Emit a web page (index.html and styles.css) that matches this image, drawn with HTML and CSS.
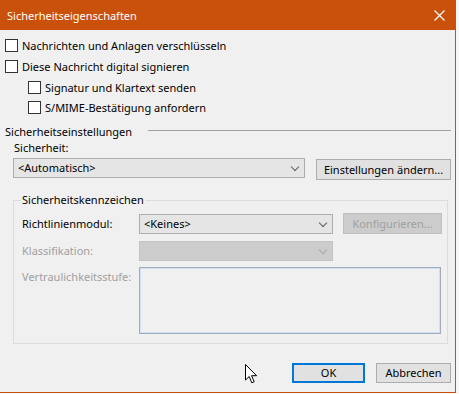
FILE: index.html
```html
<!DOCTYPE html>
<html>
<head>
    <title>Sicherheitseigenschaften</title>
    <link rel="stylesheet" href="styles.css">
</head>
<body>
    <div class="window">
        <div class="titlebar">
            <span class="title">Sicherheitseigenschaften</span>
            <svg class="close" width="11" height="11" viewBox="0 0 11 11">
                <path d="M0.5 0.5 L10.5 10.5 M10.5 0.5 L0.5 10.5" stroke="#fff" stroke-width="1.2" fill="none"/>
            </svg>
        </div>

        <div class="content">
            <div class="check"><span class="box"></span>Nachrichten und Anlagen verschlüsseln</div>
            <div class="check"><span class="box"></span>Diese Nachricht digital signieren</div>
            <div class="check sub"><span class="box"></span>Signatur und Klartext senden</div>
            <div class="check sub last"><span class="box"></span>S/MIME-Bestätigung anfordern</div>

            <div class="section-head">
                <span>Sicherheitseinstellungen</span>
                <span class="rule"></span>
            </div>
            <div class="field-label">Sicherheit:</div>
            <div class="setting-row">
                <div class="select wide">&lt;Automatisch&gt;<span class="chev"></span></div>
                <div class="btn change">Einstellungen ändern...</div>
            </div>

            <fieldset class="group">
                <legend>Sicherheitskennzeichen</legend>
                <div class="grid">
                    <div class="lbl">Richtlinienmodul:</div>
                    <div class="select">&lt;Keines&gt;<span class="chev"></span></div>
                    <div class="btn disabled">Konfigurieren...</div>

                    <div class="lbl off">Klassifikation:</div>
                    <div class="select off"><span class="chev"></span></div>
                    <div></div>

                    <div class="lbl off top">Vertraulichkeitsstufe:</div>
                    <div class="textarea"></div>
                </div>
            </fieldset>

            <div class="actions">
                <div class="btn ok">OK</div>
                <div class="btn cancel">Abbrechen</div>
            </div>
        </div>

        <svg class="cursor" width="14" height="21" viewBox="0 0 14 21">
            <path d="M0.5 0.5 L0.5 16 L4.2 12.5 L6.8 18.8 L9.2 17.8 L6.6 11.7 L11.6 11.7 Z" fill="#fff" stroke="#000" stroke-width="1"/>
        </svg>
    </div>
</body>
</html>
```

FILE: styles.css
```css
body {
    margin: 0;
    background: #f7f7f7;
    font-family: "Noto Sans", "Liberation Sans", sans-serif;
    font-size: 11px;
    color: #000;
}
.window {
    position: relative;
    width: 455px;
    height: 392px;
    background: #f0f0f0;
    border-right: 1px solid #c9510c;
    border-bottom: 1px solid #c9510c;
}
.titlebar {
    height: 30px;
    background: #c9510c;
    display: flex;
    align-items: center;
    justify-content: space-between;
    padding: 0 10px 0 7px;
}
.title {
    color: #fff;
    font-size: 11px;
}
.close {
    display: block;
}
.content {
    padding: 5px 0 0 0;
}
.check {
    display: flex;
    align-items: center;
    height: 21px;
    padding-left: 5px;
}
.check.sub {
    padding-left: 28px;
    height: 20px;
}
.box {
    width: 11px;
    height: 11px;
    border: 1px solid #333;
    background: #fff;
    margin-right: 4px;
}
.section-head {
    display: flex;
    align-items: center;
    margin-top: 6px;
    padding-left: 5px;
    height: 16px;
}
.rule {
    flex: 1;
    height: 1px;
    background: #a0a0a0;
    margin: 0 4px 2px 16px;
}
.field-label {
    padding-left: 14px;
    height: 16px;
    line-height: 16px;
    margin-top: 1px;
}
.setting-row {
    display: flex;
    align-items: flex-start;
    margin-top: 2px;
    padding-left: 13px;
}
.select {
    position: relative;
    box-sizing: border-box;
    height: 20px;
    line-height: 18px;
    background: #e5e5e5;
    border: 1px solid #adadad;
    padding-left: 4px;
}
.select.wide {
    width: 292px;
}
.select.off {
    background: #cccccc;
    border-color: #c4c4c4;
}
.chev {
    position: absolute;
    right: 6px;
    top: 5px;
    width: 5px;
    height: 5px;
    border-right: 1px solid #606060;
    border-bottom: 1px solid #606060;
    transform: rotate(45deg);
}
.select.off .chev {
    border-color: #a8a8a8;
}
.btn {
    box-sizing: border-box;
    height: 21px;
    line-height: 19px;
    text-align: center;
    background: #e1e1e1;
    border: 1px solid #adadad;
}
.change {
    width: 135px;
    margin-left: 11px;
    margin-top: 1px;
}
.group {
    margin: 12px 7px 0 13px;
    padding: 5px 0 9px 8px;
    border: 1px solid #dcdcdc;
    height: 152px;
    box-sizing: border-box;
}
.group legend {
    padding: 0 2px 0 1px;
    line-height: 16px;
    margin-left: -1px;
}
.grid {
    display: grid;
    grid-template-columns: 107px 194px 99px;
    grid-template-rows: 21px 21px 67px;
    column-gap: 10px;
    row-gap: 6px;
    align-items: center;
}
.lbl.off {
    color: #a0a0a0;
}
.lbl.top {
    align-self: start;
    margin-top: 2px;
}
.disabled {
    background: #cccccc;
    border-color: #bfbfbf;
    color: #a0a0a0;
}
.textarea {
    grid-column: 2 / 4;
    width: 302px;
    height: 67px;
    box-sizing: border-box;
    border: 1px solid #a3abb9;
    box-shadow: inset 0 0 0 1px #cfe0f6;
    background: #f0f0f0;
}
.actions {
    display: flex;
    justify-content: flex-end;
    gap: 11px;
    padding-right: 4px;
    margin-top: 19px;
}
.ok {
    width: 73px;
    height: 20px;
    line-height: 16px;
    border: 2px solid #0078d7;
}
.cancel {
    width: 75px;
    height: 20px;
    line-height: 18px;
}
.cursor {
    position: absolute;
    left: 245px;
    top: 364px;
}
```
